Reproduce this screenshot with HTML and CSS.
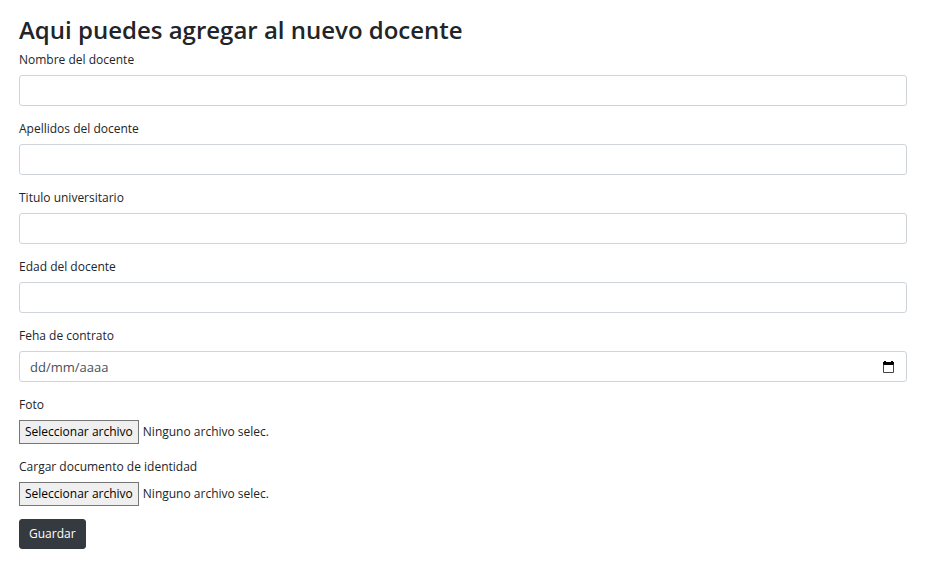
FILE: index.html
```html
<!DOCTYPE html>
<html lang="es">
<head>
  <meta charset="utf-8">
  <meta name="viewport" content="width=device-width, initial-scale=1">
  <title>Nuevo docente</title>
  <link rel="stylesheet" href="styles.css">
</head>
<body>
  <main class="page">
    <h1 class="title">Aqui puedes agregar al nuevo docente</h1>
    <form>
      <div class="group">
        <label for="nombre">Nombre del docente</label>
        <input class="control" type="text" id="nombre">
      </div>
      <div class="group">
        <label for="apellidos">Apellidos del docente</label>
        <input class="control" type="text" id="apellidos">
      </div>
      <div class="group">
        <label for="titulo">Titulo universitario</label>
        <input class="control" type="text" id="titulo">
      </div>
      <div class="group">
        <label for="edad">Edad del docente</label>
        <input class="control" type="text" id="edad">
      </div>
      <div class="group">
        <label for="fecha">Feha de contrato</label>
        <div class="control date">
          <input class="date-input" type="text" id="fecha" placeholder="dd/mm/aaaa">
          <button class="date-button" type="button">
            <svg width="11" height="12" viewBox="0 0 11 12" aria-hidden="true">
              <path d="M0 1h1V0h2v1h5V0h2v1h1v3H0z" fill="#000"/>
              <path d="M.5 3.500v8h10v-8" fill="none" stroke="#444"/>
            </svg>
          </button>
        </div>
      </div>
      <div class="group">
        <label for="foto">Foto</label>
        <div class="file">
          <input class="file-input" type="file" id="foto" tabindex="-1">
          <button class="file-button" type="button" onclick="this.previousElementSibling.click()">Seleccionar archivo</button>
          <span>Ninguno archivo selec.</span>
        </div>
      </div>
      <div class="group">
        <label for="documento">Cargar documento de identidad</label>
        <div class="file">
          <input class="file-input" type="file" id="documento" tabindex="-1">
          <button class="file-button" type="button" onclick="this.previousElementSibling.click()">Seleccionar archivo</button>
          <span>Ninguno archivo selec.</span>
        </div>
      </div>
      <button class="submit" type="submit">Guardar</button>
    </form>
  </main>
</body>
</html>
```
FILE: styles.css
```css
* {
  box-sizing: border-box;
}

body {
  margin: 0;
  background: #fff;
  color: #212529;
  font: 12px/20px "Segoe UI", "Open Sans", sans-serif;
}

input,
button {
  font: inherit;
}

.page {
  padding: 14px 27px 19px 19px;
}

.title {
  margin: 0 0 4px;
  font-size: 24px;
  font-weight: 600;
  line-height: 32px;
}

.group {
  margin-bottom: 13px;
}

.group label {
  display: block;
  margin-bottom: 5px;
}

.control {
  display: block;
  width: 100%;
  height: 31px;
  padding: 4px 10px;
  border: 1px solid #ced4da;
  border-radius: 3px;
  background: #fff;
  color: #495057;
}

.date {
  display: flex;
  align-items: center;
}

.date-input {
  flex: 1;
  min-width: 0;
  padding: 0;
  border: 0;
  outline: 0;
  background: none;
  color: inherit;
  font-size: 13px;
}

.date-input::placeholder {
  color: #495057;
  opacity: 1;
}

.date-button {
  display: flex;
  padding: 0 2px;
  border: 0;
  background: none;
}

.file {
  display: flex;
  align-items: center;
  gap: 4px;
}

.file-input {
  position: absolute;
  width: 1px;
  height: 1px;
  opacity: 0;
  pointer-events: none;
}

.file-button {
  height: 24px;
  padding: 1px 5px;
  border: 1px solid #767676;
  background: #efefef;
  color: #000;
}

.submit {
  height: 30px;
  padding: 4px 9px;
  border: 1px solid #343a40;
  border-radius: 3px;
  background: #343a40;
  color: #fff;
}
```
